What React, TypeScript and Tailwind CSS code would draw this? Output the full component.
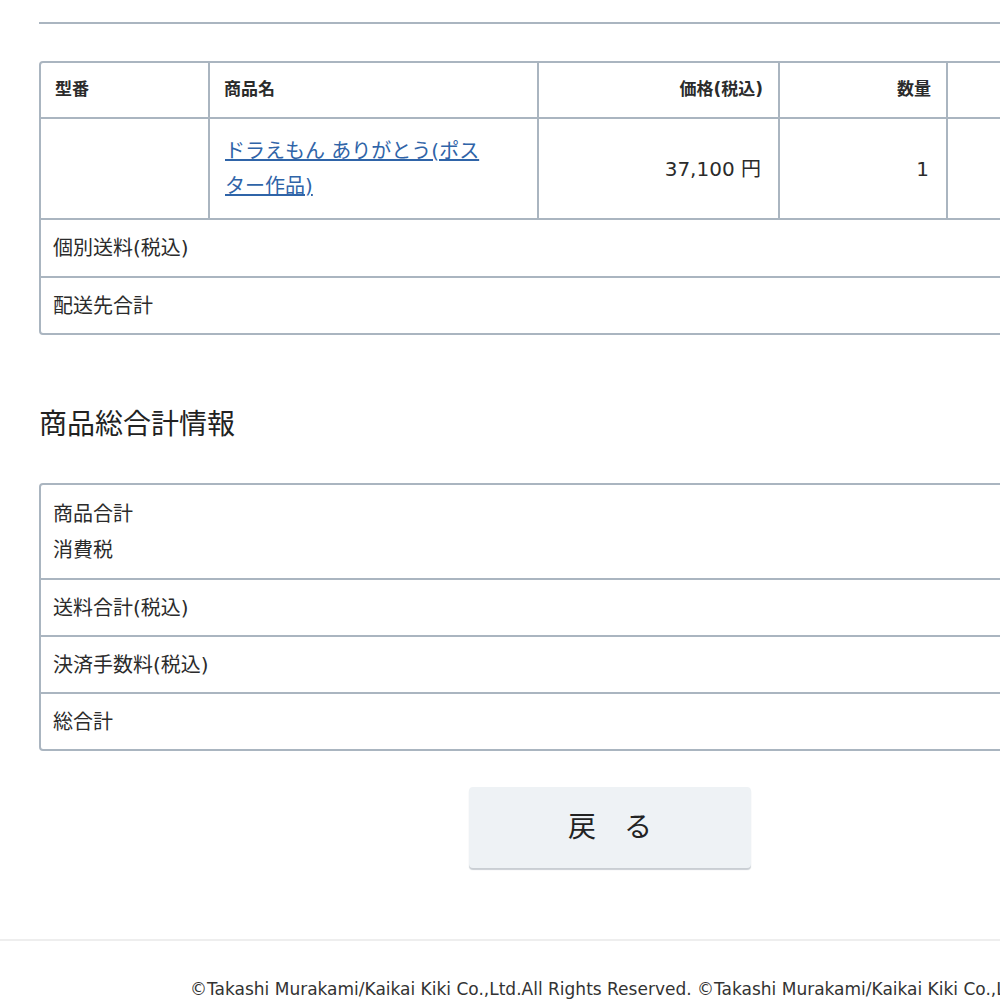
const font = { fontFamily: '"DejaVu Sans", "Noto Sans CJK JP", sans-serif' };

const cols = [
  { w: "w-[167px]", align: "text-left" },
  { w: "w-[329px]", align: "text-left" },
  { w: "w-[241px]", align: "text-right" },
  { w: "w-[168px]", align: "text-right" },
  { w: "flex-1", align: "text-right" },
];

function TotalRow({ children, tall }: { children: React.ReactNode; tall?: boolean }) {
  return (
    <div
      className={`flex flex-col justify-center px-[12px] border-t-2 border-[#aab5c0] first:border-t-0 ${
        tall ? "h-[93px] leading-[36px]" : "h-[57px]"
      }`}
    >
      {children}
    </div>
  );
}

export default function App() {
  return (
    <div className="w-full overflow-hidden bg-white" style={font}>
      <div className="w-[1220px] text-[#2b2b2b] text-[20px]">
        <div className="px-[39px]">
          <div className="pt-[22px]">
            <div className="h-[2px] bg-[#aab5c0]" />
          </div>

          {/* Delivery table */}
          <div className="mt-[37px] border-2 border-[#aab5c0] rounded-[4px]">
            <div className="flex h-[54px] text-[17px] font-bold">
              {["型番", "商品名", "価格(税込)", "数量", ""].map((t, i) => (
                <div
                  key={i}
                  className={`${cols[i].w} ${cols[i].align} flex items-center ${
                    cols[i].align === "text-right" ? "justify-end pr-[15px]" : "pl-[14px]"
                  } ${i > 0 ? "border-l-2 border-[#aab5c0]" : ""}`}
                >
                  {t}
                </div>
              ))}
            </div>
            <div className="flex h-[101px] border-t-2 border-[#aab5c0]">
              <div className={`${cols[0].w}`} />
              <div className="w-[329px] border-l-2 border-[#aab5c0] flex items-center pl-[15px] pr-[40px]">
                <a href="#" className="text-[#2f64a8] underline leading-[35px]">
                  ドラえもん ありがとう(ポスター作品)
                </a>
              </div>
              <div className="w-[241px] border-l-2 border-[#aab5c0] flex items-center justify-end pr-[17px]">
                37,100 円
              </div>
              <div className="w-[168px] border-l-2 border-[#aab5c0] flex items-center justify-end pr-[17px]">
                1
              </div>
              <div className="flex-1 border-l-2 border-[#aab5c0]" />
            </div>
            <div className="h-[58px] border-t-2 border-[#aab5c0] flex items-center px-[12px]">
              個別送料(税込)
            </div>
            <div className="h-[57px] border-t-2 border-[#aab5c0] flex items-center px-[12px]">
              配送先合計
            </div>
          </div>

          <h2 className="mt-[70px] text-[28px] leading-[40px] text-[#222]">商品総合計情報</h2>

          {/* Totals */}
          <div className="mt-[38px] border-2 border-[#aab5c0] rounded-[4px]">
            <TotalRow tall>
              <div>商品合計</div>
              <div>消費税</div>
            </TotalRow>
            <TotalRow>送料合計(税込)</TotalRow>
            <TotalRow>決済手数料(税込)</TotalRow>
            <TotalRow>総合計</TotalRow>
          </div>

          <div className="flex justify-center mt-[36px]">
            <button className="w-[282px] h-[81px] bg-[#eef2f5] rounded-[4px] shadow-[0_2px_1px_#c9ced3] text-[28px] text-[#222]">
              戻　る
            </button>
          </div>
        </div>

        <div className="mt-[71px] h-[2px] bg-[#eeeeee]" />
        <div className="pt-[36px] pb-[6px] pl-[190px] text-[17px] text-[#333] whitespace-nowrap">
          ©Takashi Murakami/Kaikai Kiki Co.,Ltd.All Rights Reserved. ©Takashi Murakami/Kaikai Kiki Co.,Ltd.All Rights Reserved.
        </div>
      </div>
    </div>
  );
}
